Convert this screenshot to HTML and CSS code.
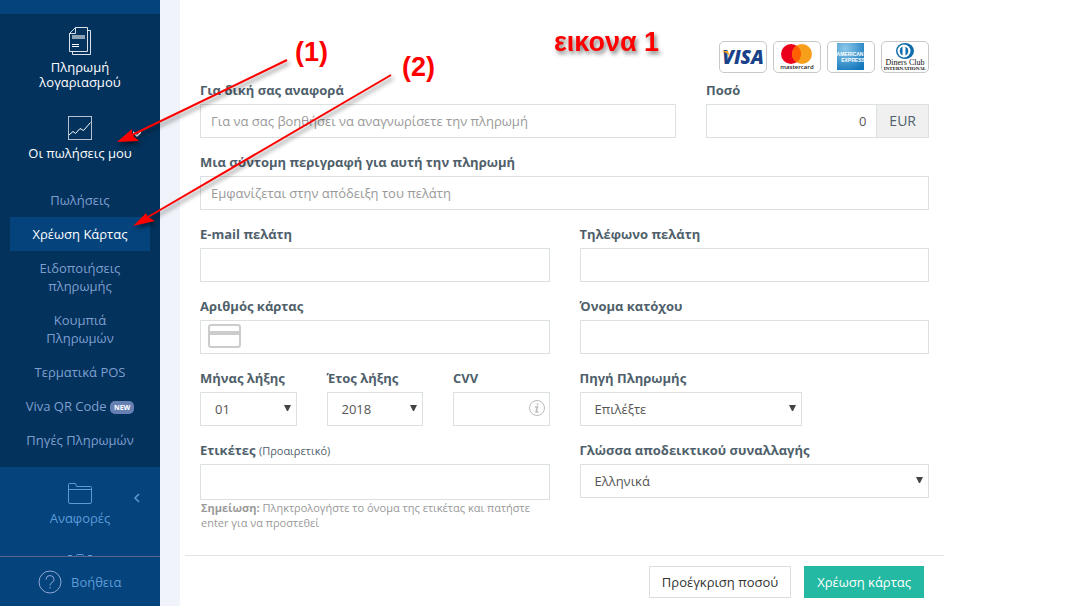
FILE: index.html
```html
<!DOCTYPE html>
<html lang="el">
<head>
  <meta charset="UTF-8">
  <meta name="viewport" content="width=device-width, initial-scale=1.0">
  <title>Χρέωση Κάρτας</title>
  <link rel="stylesheet" href="styles.css">
</head>
<body>
  <aside class="sidebar">
    <nav class="nav">
      <div class="nav-group">
        <a href="#" class="nav-item active">
          <span class="nav-top">
            <svg class="nav-icon" width="24" height="30" viewBox="0 0 24 30" fill="none" stroke="currentColor">
              <path d="M7.500 1.500H19.500V25.500H1.500V7.500ZM7.500 1.500V7.500H1.500" opacity=".85"/>
              <path d="M19.500 4.500H22.500V28.500H4.500V25.500" opacity=".85"/>
              <path d="M4 11H17" stroke-width="4" opacity=".55"/>
              <path d="M4 18.500H11M4 20.500H11"/>
            </svg>
          </span>
          <span>Πληρωμή<br>λογαριασμού</span>
        </a>
        <a href="#" class="nav-item active">
          <span class="nav-top">
            <svg class="nav-icon" width="24" height="28" viewBox="0 0 24 28" fill="none" stroke="currentColor">
              <rect x=".5" y="2.500" width="23" height="23" opacity=".7"/>
              <path d="M1 21L5 17.500L7.500 19.500L12 14.500L15.500 16.500L22.500 8.500"/>
            </svg>
            <svg class="chevron" width="8" height="8" viewBox="0 0 8 8" fill="none" stroke="currentColor" stroke-width="1.500"><path d="M0 2L4 6L8 2"/></svg>
          </span>
          <span>Οι πωλήσεις μου</span>
        </a>
        <ul class="submenu">
          <li><a href="#">Πωλήσεις</a></li>
          <li><a href="#" class="current">Χρέωση Κάρτας</a></li>
          <li><a href="#">Ειδοποιήσεις<br>πληρωμής</a></li>
          <li><a href="#">Κουμπιά<br>Πληρωμών</a></li>
          <li><a href="#">Τερματικά POS</a></li>
          <li><a href="#">Viva QR Code <span class="badge">NEW</span></a></li>
          <li><a href="#">Πηγές Πληρωμών</a></li>
        </ul>
      </div>
      <a href="#" class="nav-item">
        <span class="nav-top">
          <svg class="nav-icon" width="24" height="28" viewBox="0 0 24 28" fill="none" stroke="currentColor">
            <path d="M.5 23V5.500Q.5 4.500 1.500 4.500H7.500L8.500 7.500H22.500Q23.500 7.500 23.500 8.500V23Q23.500 24.500 22 24.500H2Q.5 24.500 .5 23ZM.5 10.500H23.500"/>
          </svg>
          <svg class="chevron" width="8" height="10" viewBox="0 0 8 10" fill="none" stroke="currentColor" stroke-width="1.500"><path d="M6 1L2 5L6 9"/></svg>
        </span>
        <span>Αναφορές</span>
      </a>
      <a href="#" class="nav-item" aria-label="Ρυθμίσεις">
        <span class="nav-top">
          <svg class="nav-icon" width="24" height="28" viewBox="0 0 24 28" fill="none" stroke="currentColor">
            <path d="M8.500 9V5.500Q8.500 4.500 9.500 4.500H14.500Q15.500 4.500 15.500 5.500V9M0 5.500H4M20 5.500H24"/>
          </svg>
        </span>
      </a>
    </nav>
    <a href="#" class="help">
      <svg width="24" height="24" viewBox="0 0 24 24" fill="none" stroke="currentColor">
        <circle cx="12" cy="12" r="11"/>
        <path d="M8 9.500Q8 5.500 12 5.500T16 9.500Q16 11.500 14 12.500T12 15.500M12 17V18.500"/>
      </svg>
      <span>Βοήθεια</span>
    </a>
  </aside>

  <main class="content">
    <form class="charge-form">
      <div class="cards">
        <svg class="card" viewBox="0 0 46 30" role="img" aria-label="Visa">
          <text x="23" y="22" class="visa">VISA</text>
          <path d="M1 9H8L10 15Q7 10 1 9Z" fill="#f5a623"/>
        </svg>
        <svg class="card" viewBox="0 0 46 30" role="img" aria-label="Mastercard">
          <circle cx="17" cy="12" r="10" fill="#eb001b"/>
          <circle cx="28" cy="12" r="10" fill="#f79e1b"/>
          <path d="M22.500 3.600A10 10 0 0 1 22.500 20.400A10 10 0 0 1 22.500 3.600Z" fill="#ff5f00"/>
          <text x="23" y="27" class="mastercard">mastercard</text>
        </svg>
        <svg class="card" viewBox="0 0 46 30" role="img" aria-label="American Express">
          <defs>
            <radialGradient id="amexBlue" cx=".3" cy=".2" r=".9">
              <stop offset="0" stop-color="#8cc8ea"/>
              <stop offset="1" stop-color="#1578bd"/>
            </radialGradient>
          </defs>
          <rect x="9" y="1" width="27" height="27" fill="url(#amexBlue)"/>
          <text x="22" y="14" class="amex">AMERICAN</text>
          <text x="25" y="20" class="amex">EXPRESS</text>
        </svg>
        <svg class="card" viewBox="0 0 46 30" role="img" aria-label="Diners Club">
          <ellipse cx="23" cy="9" rx="9" ry="8" fill="#0f6cab"/>
          <circle cx="22" cy="9" r="6.500" fill="#fff"/>
          <path d="M20.500 4.500A5 5 0 0 0 20.500 13.500ZM23.500 4.500A5 5 0 0 1 23.500 13.500Z" fill="#0f6cab"/>
          <text x="23" y="23" class="diners">Diners Club</text>
          <text x="23" y="28" class="diners-sub">INTERNATIONAL</text>
        </svg>
      </div>

      <div class="row row-amount">
        <div class="field">
          <label for="reference">Για δική σας αναφορά</label>
          <input type="text" id="reference" placeholder="Για να σας βοηθήσει να αναγνωρίσετε την πληρωμή">
        </div>
        <div class="field">
          <label for="amount">Ποσό</label>
          <div class="input-group">
            <input type="text" id="amount" class="amount" value="0">
            <span class="addon">EUR</span>
          </div>
        </div>
      </div>

      <div class="row">
        <div class="field">
          <label for="description">Μια σύντομη περιγραφή για αυτή την πληρωμή</label>
          <input type="text" id="description" placeholder="Εμφανίζεται στην απόδειξη του πελάτη">
        </div>
      </div>

      <div class="row row-half">
        <div class="field">
          <label for="email">E-mail πελάτη</label>
          <input type="email" id="email">
        </div>
        <div class="field">
          <label for="phone">Τηλέφωνο πελάτη</label>
          <input type="tel" id="phone">
        </div>
      </div>

      <div class="row row-half">
        <div class="field">
          <label for="cardNumber">Αριθμός κάρτας</label>
          <input type="text" id="cardNumber" class="card-number">
        </div>
        <div class="field">
          <label for="holder">Όνομα κατόχου</label>
          <input type="text" id="holder">
        </div>
      </div>

      <div class="row row-half">
        <div class="row row-third">
          <div class="field">
            <label for="month">Μήνας λήξης</label>
            <select id="month"><option>01</option><option>02</option><option>03</option></select>
          </div>
          <div class="field">
            <label for="year">Έτος λήξης</label>
            <select id="year"><option>2018</option><option>2019</option><option>2020</option></select>
          </div>
          <div class="field">
            <label for="cvv">CVV</label>
            <input type="text" id="cvv" class="cvv">
          </div>
        </div>
        <div class="row row-source">
          <div class="field">
            <label for="source">Πηγή Πληρωμής</label>
            <select id="source"><option>Επιλέξτε</option></select>
          </div>
        </div>
      </div>

      <div class="row row-half">
        <div class="field">
          <label for="tags">Ετικέτες <small>(Προαιρετικό)</small></label>
          <input type="text" id="tags" class="tags">
          <p class="note"><strong>Σημείωση:</strong> Πληκτρολογήστε το όνομα της ετικέτας και πατήστε enter για να προστεθεί</p>
        </div>
        <div class="field">
          <label for="language">Γλώσσα αποδεικτικού συναλλαγής</label>
          <select id="language"><option>Ελληνικά</option><option>English</option></select>
        </div>
      </div>

      <div class="form-footer">
        <button type="button" class="btn">Προέγκριση ποσού</button>
        <button type="submit" class="btn btn-primary">Χρέωση κάρτας</button>
      </div>
    </form>
  </main>

  <!-- step markers on top of the page -->
  <svg class="annotations" width="680" height="240" viewBox="0 0 680 240" fill="#f00">
    <g class="shadow">
      <path d="M287 60L132 135" stroke="#f00" stroke-width="2"/>
      <path d="M117 142L132 129L132 135L139 141Z"/>
      <path d="M391 75L148 217" stroke="#f00" stroke-width="2"/>
      <path d="M133 226L146 213L148 217L155 221Z"/>
      <text x="554" y="51" class="figure-title">εικονα 1</text>
    </g>
    <text x="295" y="61" class="step">(1)</text>
    <text x="402" y="76" class="step">(2)</text>
  </svg>
</body>
</html>
```
FILE: styles.css
```css
:root {
  --blue: #05437c;
  --blue-dark: #03325c;
  --blue-text: #7f9fd0;
  --border: #dbe0e2;
  --text: #4f5f6b;
  --green: #23b9a2;
}

* {
  box-sizing: border-box;
}

body {
  margin: 0;
  display: flex;
  height: 100vh;
  overflow: hidden;
  background: #f0f3f9;
  font-family: "Open Sans", sans-serif;
  font-size: 13px;
  line-height: 18px;
  color: var(--text);
}

a {
  text-decoration: none;
}

/* sidebar */
.sidebar {
  flex: 0 0 160px;
  display: flex;
  flex-direction: column;
  background: var(--blue);
}

.nav {
  flex: 1;
  min-height: 0;
  padding-top: 14px;
  overflow: hidden;
}

.nav-group {
  padding-bottom: 10px;
  background: var(--blue-dark);
}

.nav-item {
  display: flex;
  flex-direction: column;
  gap: 4px;
  padding: 12px 0;
  line-height: 15px;
  text-align: center;
  color: #5b9bd8;
}

.nav-item.active {
  font-weight: 500;
  color: #fff;
}

.nav-top {
  display: grid;
  grid-template-columns: 1fr auto 1fr;
}

.nav-icon {
  grid-column: 2;
}

.chevron {
  grid-column: 3;
  align-self: end;
  justify-self: end;
  margin: 0 19px 4px 0;
}

.submenu {
  list-style: none;
  margin: 0;
  padding: 10px 10px 0;
}

.submenu a {
  display: block;
  padding: 8px 0;
  text-align: center;
  color: var(--blue-text);
}

.submenu a.current {
  background: var(--blue);
  color: #fff;
}

.badge {
  display: inline-block;
  padding: 0 4px;
  border-radius: 5px;
  background: #6680b3;
  font-size: 7px;
  font-weight: 700;
  line-height: 13px;
  vertical-align: middle;
  color: #fff;
}

.help {
  display: flex;
  align-items: center;
  gap: 9px;
  height: 50px;
  padding: 0 0 0 38px;
  border-top: 1px solid #56688e;
  color: #5b9bd8;
}

.help svg {
  color: #8fa8d6;
}

/* form */
.content {
  flex: 1;
  margin-left: 20px;
  padding: 41px 5px 0;
  background: #fff;
}

.charge-form {
  max-width: 759px;
  padding: 0 15px;
}

.cards {
  display: flex;
  justify-content: flex-end;
  gap: 6px;
  margin-bottom: 8px;
}

.card {
  width: 48px;
  height: 32px;
  border: 1px solid #c8c8c8;
  border-radius: 5px;
}

.visa {
  font: italic 800 19px "Open Sans", sans-serif;
  text-anchor: middle;
  fill: #1a4289;
}

.mastercard {
  font: 600 6px "Open Sans", sans-serif;
  text-anchor: middle;
  fill: #222;
}

.amex {
  font: 700 5px "Liberation Sans", sans-serif;
  text-anchor: middle;
  fill: #fff;
}

.diners {
  font: 8px "Liberation Serif", serif;
  text-anchor: middle;
  fill: #111;
}

.diners-sub {
  font: 700 5px "Liberation Serif", serif;
  text-anchor: middle;
  fill: #111;
}

.row {
  display: grid;
  column-gap: 30px;
  margin-bottom: 15px;
}

.row-amount {
  grid-template-columns: 476fr 223fr;
}

.row-half {
  grid-template-columns: 1fr 1fr;
}

.row-third {
  grid-template-columns: 1fr 1fr 1fr;
  margin-bottom: 0;
}

.row-source {
  grid-template-columns: 223fr 97fr;
  margin-bottom: 0;
}

.field {
  min-width: 0;
}

label {
  display: block;
  margin-bottom: 5px;
  font-weight: 700;
}

label small {
  font-size: 11px;
  font-weight: 400;
  line-height: 11px;
}

input,
select {
  display: block;
  width: 100%;
  height: 34px;
  padding: 0 10px;
  border: 1px solid var(--border);
  border-radius: 0;
  background-color: #fff;
  font: inherit;
  color: #555;
}

input::placeholder {
  color: #999;
}

select {
  appearance: none;
  padding: 0 14px;
  background-image: url("data:image/svg+xml,%3Csvg xmlns='http://www.w3.org/2000/svg' width='7' height='8'%3E%3Cpath d='M0 0H7L4 6H3Z' fill='%23444'/%3E%3C/svg%3E");
  background-repeat: no-repeat;
  background-position: right 5px center;
}

.input-group {
  display: flex;
}

.amount {
  flex: 1;
  min-width: 0;
  text-align: right;
}

.addon {
  padding: 7px 12px;
  border: 1px solid var(--border);
  border-left: 0;
  background: #f0f0f0;
  font-size: 14px;
}

.card-number {
  padding-left: 50px;
  background-image: url("data:image/svg+xml,%3Csvg xmlns='http://www.w3.org/2000/svg' width='33' height='24'%3E%3Crect x='1' y='1' width='31' height='22' rx='2' fill='none' stroke='%23ccc' stroke-width='2'/%3E%3Cpath d='M1 7H32V11H1Z' fill='%23ccc'/%3E%3C/svg%3E");
  background-repeat: no-repeat;
  background-position: 7px 3px;
}

.cvv {
  background-image: url("data:image/svg+xml,%3Csvg xmlns='http://www.w3.org/2000/svg' width='16' height='16' fill='none' stroke='%23bbb'%3E%3Ccircle cx='8' cy='8' r='7.500'/%3E%3Cpath d='M6 7H8.500L7 12H9.500M8.500 3.500V5.200' stroke-width='1.500'/%3E%3C/svg%3E");
  background-repeat: no-repeat;
  background-position: right 4px top 7px;
}

.tags {
  height: 36px;
}

.note {
  margin: 0;
  padding: 0 1px;
  font-size: 11px;
  line-height: 15px;
  color: #999;
}

.form-footer {
  display: flex;
  justify-content: flex-end;
  gap: 13px;
  margin: 25px -15px 0;
  padding: 10px 20px;
  border-top: 1px solid #e2e5e6;
}

.btn {
  height: 32px;
  padding: 0 12px;
  border: 1px solid #ddd;
  background: #fff;
  font: inherit;
  color: #333;
}

.btn-primary {
  border-color: var(--green);
  background: var(--green);
  color: #fff;
}

/* markers */
.annotations {
  position: absolute;
  top: 0;
  left: 0;
  pointer-events: none;
}

.shadow {
  filter: drop-shadow(2px 3px 2px rgba(0, 0, 0, 0.5));
}

.step,
.figure-title {
  font: 700 27px "Liberation Sans", sans-serif;
}
```
